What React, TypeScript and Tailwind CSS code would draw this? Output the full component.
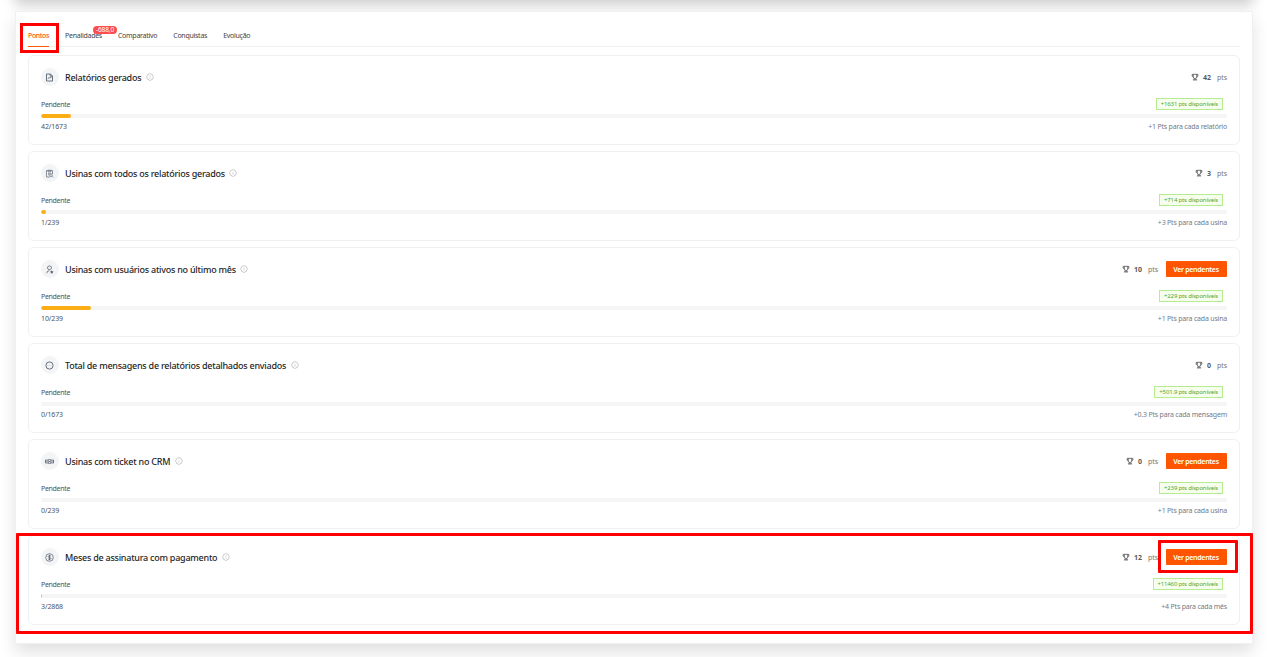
import React from "react";
import { AiOutlineInfoCircle, AiOutlineTrophy } from "react-icons/ai";
import { RiUserStarLine } from "react-icons/ri";

type Item = {
  title: string;
  icon: React.ReactNode;
  points: string;
  done: string;
  fill: string;
  available: string;
  rule: string;
  pending?: boolean;
};

function Glyph({ children, className = "" }: { children: React.ReactNode; className?: string }) {
  return (
    <svg width="9" height="9" viewBox="0 0 18 18" fill="none" stroke="currentColor" strokeWidth="1.8" className={className}>
      {children}
    </svg>
  );
}

const FileIcon = () => (
  <Glyph>
    <path d="M3 2h8l4 4v10H3zM10.500 2v4.500H15M5.500 11.500l3-2.500 1.500 1.500 3-3" />
  </Glyph>
);

const ClipboardIcon = () => (
  <Glyph className="text-[#7c8390]">
    <path d="M10 16H3V3h12v7M6 2.500h6v3H6zM6 8.500h6M6 11.500h3" />
    <circle cx="12" cy="12.500" r="2.500" />
    <path d="M14 14.500l2.500 2.500" />
  </Glyph>
);

const MessageIcon = () => (
  <Glyph>
    <circle cx="9" cy="9" r="7.200" />
    <path d="M5.500 9h1M8.500 9h1M11.500 9h1" strokeWidth="0.800" />
  </Glyph>
);

const CrmIcon = () => (
  <Glyph>
    <path d="M1 5.500v7M17 5.500v7M4 4.500v9M14 4.500v9" />
    <path d="M6.500 5h5v8h-5zM6.500 7l5 4M11.500 7l-5 4" strokeWidth="1.300" />
  </Glyph>
);

const CoinIcon = () => (
  <Glyph>
    <circle cx="9" cy="9" r="7.600" strokeWidth="1.500" />
    <path d="M12 6.500C11 5.200 6.300 5 6.300 7.200S12 8.800 12 11s-5 2-6 .5M9 3.500v11" strokeWidth="1.700" />
  </Glyph>
);

const items: Item[] = [
  { title: "Relatórios gerados", icon: <FileIcon />, points: "42", done: "42/1673", fill: "w-[30px]", available: "+1631 pts disponíveis", rule: "+1 Pts para cada relatório" },
  { title: "Usinas com todos os relatórios gerados", icon: <ClipboardIcon />, points: "3", done: "1/239", fill: "w-[5px]", available: "+714 pts disponíveis", rule: "+3 Pts para cada usina" },
  { title: "Usinas com usuários ativos no último mês", icon: <RiUserStarLine size={9} />, points: "10", done: "10/239", fill: "w-[50px]", available: "+229 pts disponíveis", rule: "+1 Pts para cada usina", pending: true },
  { title: "Total de mensagens de relatórios detalhados enviados", icon: <MessageIcon />, points: "0", done: "0/1673", fill: "w-0", available: "+501.9 pts disponíveis", rule: "+0.3 Pts para cada mensagem" },
  { title: "Usinas com ticket no CRM", icon: <CrmIcon />, points: "0", done: "0/239", fill: "w-0", available: "+239 pts disponíveis", rule: "+1 Pts para cada usina", pending: true },
  { title: "Meses de assinatura com pagamento", icon: <CoinIcon />, points: "12", done: "3/2868", fill: "w-px", available: "+11460 pts disponíveis", rule: "+4 Pts para cada mês", pending: true },
];

function Card({ item }: { item: Item }) {
  return (
    <section className="flex h-[90px] shrink-0 flex-col rounded-[6px] border border-[#f0f0f0] px-3 pt-3">
      <div className="flex h-[18px] items-center">
        <span className="flex size-[18px] items-center justify-center rounded-full bg-[#f3f4f6] pr-px text-[#5b6372]">{item.icon}</span>
        <h2 className="ml-[6px] pt-[2px] text-[9px] font-medium tracking-[-0.25px] text-[#1f1f1f]">{item.title}</h2>
        <AiOutlineInfoCircle size={8} className="ml-[4.500px] text-[#a6a6a6]" />
        <div className="ml-auto flex items-center text-[7px] text-[#737373]">
          <AiOutlineTrophy size={8} className="stroke-[#595959] [stroke-width:30] text-[#595959]" />
          <b className="ml-[4px] pt-[2px] font-bold text-[#595959]">{item.points}</b>
          <span className="ml-[6px] pt-[2px] tracking-[-0.1px]">pts</span>
          {item.pending && (
            <button className="ml-2 h-4 w-[61px] rounded-[1px] bg-[#ff5500] pt-[2px] pr-px text-[7px] font-semibold tracking-[-0.3px] text-white">Ver pendentes</button>
          )}
        </div>
      </div>
      <div className="mt-[12px] flex h-3 items-center justify-between text-[7px] text-[#4b5563]">
        <span className="pt-[2px] tracking-[-0.3px]">Pendente</span>
        <span className="mr-1 flex h-3 items-center border border-[#b7eb8f] bg-[#f6ffed] px-1 text-[6px] tracking-[-0.16px] text-[#52a535]">{item.available}</span>
      </div>
      <div className="mt-1 h-1 overflow-hidden rounded-full bg-[#f5f5f5]">
        <div className={"h-1 rounded-full bg-[#faad14] " + item.fill} />
      </div>
      <div className="mt-[4px] flex h-[11px] items-center justify-between text-[7px] text-[#4b5563]">
        <span className="tracking-[-0.1px]">{item.done}</span>
        <span className="tracking-[-0.2px] text-[#737b86]">{item.rule}</span>
      </div>
    </section>
  );
}

export default function App() {
  return (
    <div className="relative h-[657px] w-[1267px] overflow-hidden bg-white font-['Noto_Sans',sans-serif] whitespace-nowrap">
      <div className="absolute -top-10 left-[15px] h-10 w-[1238px] bg-white shadow-[0_4px_14px_rgba(0,0,0,0.22)]" />
      <main className="absolute top-[11px] left-[15px] flex h-[633px] w-[1238px] flex-col border border-[#f0f0f0] bg-white px-3 shadow-[0_8px_16px_rgba(0,0,0,0.12)]">
        <nav className="flex h-[35px] shrink-0 gap-4 border-b border-[#f0f0f0] pt-3 text-[7px] tracking-[-0.27px] text-[#434343]">
          <span className="flex h-[23px] items-center border-b border-[#ff5500] pt-[2px] font-medium tracking-[-0.38px] text-[#ff5500]">Pontos</span>
          <span className="relative flex h-[23px] items-center pt-px">
            Penalidades
            <span className="absolute top-[2px] left-[28px] flex h-[8px] w-6 items-center justify-center rounded-full bg-[#ff4d4f] text-[6.500px] tracking-[-0.1px] text-white">-688,0</span>
          </span>
          <span className="flex h-[23px] items-center pt-px">Comparativo</span>
          <span className="flex h-[23px] items-center pt-px">Conquistas</span>
          <span className="flex h-[23px] items-center pt-px">Evolução</span>
        </nav>
        <div className="mt-2 flex flex-col gap-[6px]">
          {items.map((item) => (
            <Card key={item.title} item={item} />
          ))}
        </div>
      </main>
      <div className="absolute top-[23px] left-[20px] h-[30px] w-[39px] border-3 border-[#ff0000]" />
      <div className="absolute top-[533px] left-[16px] h-[101px] w-[1237px] rounded-[1px] border-3 border-[#ff0000]" />
      <div className="absolute top-[540px] left-[1158px] h-[33px] w-[80px] rounded-[1px] border-3 border-[#ff0000]" />
    </div>
  );
}
